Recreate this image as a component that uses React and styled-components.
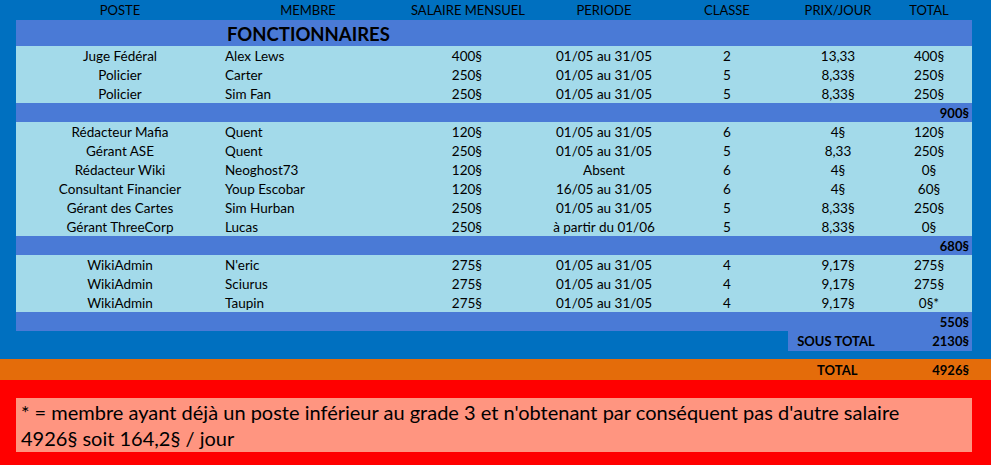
import React from 'react';
import styled, { createGlobalStyle } from 'styled-components';

const GlobalStyle = createGlobalStyle`
  html, body {
    margin: 0;
    padding: 0;
    width: 991px;
    height: 465px;
    overflow: hidden;
    font-family: Lato, "Open Sans", sans-serif;
    color: #000;
  }
`;

const COLS = '208px 168px 152px 120px 126px 96px 86px';

const groups = [
  {
    total: '900§',
    rows: [
      ['Juge Fédéral', 'Alex Lews', '400§', '01/05 au 31/05', '2', '13,33', '400§'],
      ['Policier', 'Carter', '250§', '01/05 au 31/05', '5', '8,33§', '250§'],
      ['Policier', 'Sim Fan', '250§', '01/05 au 31/05', '5', '8,33§', '250§'],
    ],
  },
  {
    total: '680§',
    rows: [
      ['Rédacteur Mafia', 'Quent', '120§', '01/05 au 31/05', '6', '4§', '120§'],
      ['Gérant ASE', 'Quent', '250§', '01/05 au 31/05', '5', '8,33', '250§'],
      ['Rédacteur Wiki', 'Neoghost73', '120§', 'Absent', '6', '4§', '0§'],
      ['Consultant Financier', 'Youp Escobar', '120§', '16/05 au 31/05', '6', '4§', '60§'],
      ['Gérant des Cartes', 'Sim Hurban', '250§', '01/05 au 31/05', '5', '8,33§', '250§'],
      ['Gérant ThreeCorp', 'Lucas', '250§', 'à partir du 01/06', '5', '8,33§', '0§'],
    ],
  },
  {
    total: '550§',
    rows: [
      ['WikiAdmin', "N'eric", '275§', '01/05 au 31/05', '4', '9,17§', '275§'],
      ['WikiAdmin', 'Sciurus', '275§', '01/05 au 31/05', '4', '9,17§', '275§'],
      ['WikiAdmin', 'Taupin', '275§', '01/05 au 31/05', '4', '9,17§', '0§*'],
    ],
  },
];

// alignment of each data column
const dataAlign = [
  { align: 'center' },
  { align: 'left', pad: '0 0 0 1px' },
  { align: 'right', pad: '0 62px 0 0' },
  { align: 'center' },
  { align: 'center' },
  { align: 'center' },
  { align: 'center' },
];

const headers = ['POSTE', 'MEMBRE', 'SALAIRE MENSUEL', 'PERIODE', 'CLASSE', 'PRIX/JOUR', 'TOTAL'];

export default function App() {
  return (
    <>
      <GlobalStyle />
      <Sheet>
        <HeadRow>
          {headers.map(h => <HeadCell key={h}>{h}</HeadCell>)}
        </HeadRow>
        <TitleRow>
          <span />
          <Title>FONCTIONNAIRES</Title>
        </TitleRow>
        {groups.map((g, gi) => (
          <React.Fragment key={gi}>
            {g.rows.map((r, ri) => (
              <DataRow key={ri}>
                {r.map((c, ci) => (
                  <Cell key={ci} $align={dataAlign[ci].align} $pad={dataAlign[ci].pad}>{c}</Cell>
                ))}
              </DataRow>
            ))}
            <SubRow>
              <Sum>{g.total}</Sum>
            </SubRow>
          </React.Fragment>
        ))}
        <SousTotalRow>
          <SousTotalBox>
            <Label>SOUS TOTAL</Label>
            <Sum>2130§</Sum>
          </SousTotalBox>
        </SousTotalRow>
      </Sheet>
      <TotalBand>
        <Label>TOTAL</Label>
        <Sum>4926§</Sum>
      </TotalBand>
      <Footer>
        <Note>
          * = membre ayant déjà un poste inférieur au grade 3 et n'obtenant par conséquent pas d'autre salaire
          <br />
          4926§ soit 164,2§ / jour
        </Note>
      </Footer>
    </>
  );
}

const Sheet = styled.div`
  background: #0070c0;
  padding: 0 19px 8px 16px;
`;

const Row = styled.div`
  display: grid;
  grid-template-columns: ${COLS};
  align-items: center;
`;

const HeadRow = styled(Row)`
  height: 20px;
`;

const HeadCell = styled.div`
  text-align: center;
  font-size: 13px;
  white-space: nowrap;
`;

const TitleRow = styled(Row)`
  height: 26px;
  background: #4a7ad6;
`;

const Title = styled.div`
  grid-column: 2 / 4;
  font-weight: 700;
  font-size: 18.5px;
  padding-left: 3px;
  padding-top: 1px;
`;

const DataRow = styled(Row)`
  height: 19px;
  background: #a3daea;
`;

const Cell = styled.div`
  text-align: ${p => p.$align};
  padding: ${p => p.$pad || '0'};
  font-size: 13.5px;
  white-space: nowrap;
  line-height: 19px;
  padding-top: 1px;
`;

const SubRow = styled.div`
  height: 19px;
  background: #4a7ad6;
  display: flex;
  align-items: center;
  justify-content: flex-end;
  padding-right: 3px;
`;

const Sum = styled.span`
  font-weight: 700;
  font-size: 13px;
`;

const Label = styled.span`
  font-weight: 700;
  font-size: 13px;
  width: 96px;
  text-align: center;
`;

const SousTotalRow = styled.div`
  height: 20px;
  display: flex;
  justify-content: flex-end;
`;

const SousTotalBox = styled.div`
  width: 184px;
  background: #4a7ad6;
  display: flex;
  align-items: center;
  justify-content: space-between;
  padding-right: 3px;
  box-sizing: border-box;
`;

const TotalBand = styled.div`
  height: 21px;
  background: #e46c0a;
  display: flex;
  align-items: center;
  justify-content: flex-end;
  padding: 0 22px 0 16px;

  ${Label} {
    margin-right: 47px;
  }
`;

const Footer = styled.div`
  height: 85px;
  background: #ff0000;
  padding: 18px 19px 0 16px;
  box-sizing: border-box;
`;

const Note = styled.div`
  height: 54px;
  background: #ff9580;
  box-sizing: border-box;
  padding: 1px 0 0 5px;
  font-size: 20px;
  line-height: 26px;
  white-space: nowrap;
`;
